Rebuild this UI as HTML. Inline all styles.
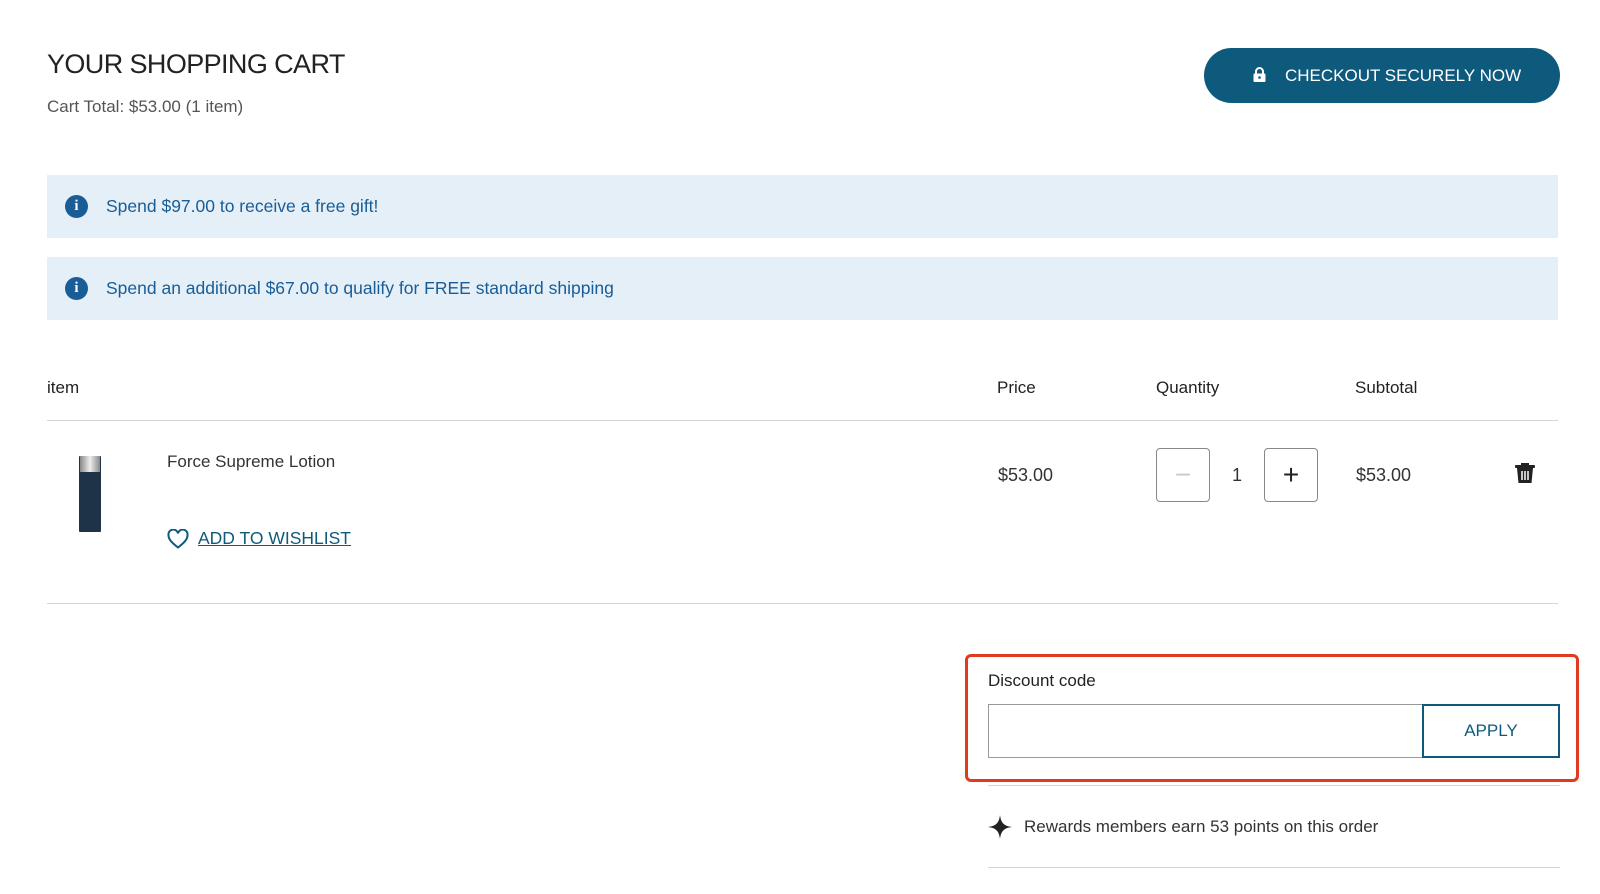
<!DOCTYPE html>
<html><head><meta charset="utf-8"><style>
*{box-sizing:border-box;margin:0;padding:0}
body{width:1600px;height:894px;background:#fff;font-family:"Liberation Sans",sans-serif;color:#222;position:relative;overflow:hidden}
.a{position:absolute;white-space:nowrap}
h1{position:absolute;left:47px;top:49px;font-size:27px;font-weight:400;color:#222;letter-spacing:-0.6px}
.banner{position:absolute;left:47px;width:1511px;height:63px;background:#e4eff8;color:#1a5d96;font-size:17.5px}
.banner .ic{position:absolute;left:18px;top:20px;width:23px;height:23px;border-radius:50%;background:#1a5d96;color:#fff;font-weight:700;font-size:15px;text-align:center;line-height:23px;font-family:"Liberation Serif",serif}
.banner span.t{position:absolute;left:59px;top:21px}
.hr{position:absolute;height:1px;background:#d6d6d6}
.qb{position:absolute;top:448px;width:54px;height:54px;border:1px solid #888;border-radius:4px;text-align:center;line-height:52px;font-size:28px}
</style></head><body>
<h1>YOUR SHOPPING CART</h1>
<div class="a" style="left:47px;top:97px;font-size:17px;color:#555">Cart Total: $53.00 (1 item)</div>
<div class="a" style="left:1204px;top:48px;width:356px;height:55px;border-radius:28px;background:#0d5a7d;color:#fff;font-size:17px;line-height:55px">
<svg style="position:absolute;left:49px;top:19px" width="13" height="15" viewBox="0 0 13 15"><path d="M3 7V4.5a3.5 3.5 0 0 1 7 0V7" fill="none" stroke="#fff" stroke-width="2"/><rect x="0.5" y="6.5" width="12" height="8.5" rx="1" fill="#fff"/><circle cx="6.5" cy="10.5" r="1.3" fill="#0d5a7d"/></svg>
<span style="position:absolute;left:81px">CHECKOUT SECURELY NOW</span></div>
<div class="banner" style="top:175px"><div class="ic">i</div><span class="t">Spend $97.00 to receive a free gift!</span></div>
<div class="banner" style="top:257px"><div class="ic">i</div><span class="t">Spend an additional $67.00 to qualify for FREE standard shipping</span></div>
<div class="a" style="left:47px;top:378px;font-size:17px">item</div>
<div class="a" style="left:997px;top:378px;font-size:17px">Price</div>
<div class="a" style="left:1156px;top:378px;font-size:17px">Quantity</div>
<div class="a" style="left:1355px;top:378px;font-size:17px">Subtotal</div>
<div class="hr" style="left:47px;top:420px;width:1511px"></div>
<div class="a" style="left:79px;top:456px;width:22px;height:76px;background:#1f3348;border-radius:1px"></div>
<div class="a" style="left:80px;top:456px;width:20px;height:16px;background:linear-gradient(90deg,#888,#eee,#888)"></div>
<div class="a" style="left:167px;top:452px;font-size:17px;color:#333">Force Supreme Lotion</div>
<svg class="a" style="left:167px;top:529px" width="22" height="20" viewBox="0 0 22 20"><path d="M11 18.5C4 13 1.5 10 1.5 6.3A4.8 4.8 0 0 1 11 4.5a4.8 4.8 0 0 1 9.5 1.8C20.5 10 18 13 11 18.5z" fill="none" stroke="#0d5a7d" stroke-width="2"/></svg>
<div class="a" style="left:198px;top:528px;font-size:17.5px;color:#0d5a7d;text-decoration:underline">ADD TO WISHLIST</div>
<div class="a" style="left:998px;top:465px;font-size:18px;color:#333">$53.00</div>
<div class="qb" style="left:1156px;color:#ccc">−</div>
<div class="a" style="left:1232px;top:465px;font-size:18px;color:#333">1</div>
<div class="qb" style="left:1264px;color:#222">+</div>
<div class="a" style="left:1356px;top:465px;font-size:18px;color:#333">$53.00</div>
<svg class="a" style="left:1514px;top:462px" width="22" height="22" viewBox="0 0 22 22"><rect x="7" y="1" width="8" height="3" fill="#222"/><rect x="1" y="3" width="20" height="3" rx="1" fill="#222"/><path d="M3 6l1.5 15h13L19 6z" fill="#222"/><path d="M8 9v9M11 9v9M14 9v9" stroke="#fff" stroke-width="1.5"/></svg>
<div class="hr" style="left:47px;top:603px;width:1511px"></div>
<div class="a" style="left:965px;top:654px;width:614px;height:128px;border:3px solid #e23a1f;border-radius:6px"></div>
<div class="a" style="left:988px;top:671px;font-size:17px">Discount code</div>
<div class="a" style="left:988px;top:704px;width:435px;height:54px;border:1px solid #999"></div>
<div class="a" style="left:1422px;top:704px;width:138px;height:54px;border:2px solid #0d5a7d;color:#0d5a7d;font-size:17px;text-align:center;line-height:50px">APPLY</div>
<div class="hr" style="left:988px;top:785px;width:572px"></div>
<svg class="a" style="left:988px;top:815px" width="24" height="24" viewBox="0 0 24 24"><path d="M12 0C13 8 16 11 24 12 16 13 13 16 12 24 11 16 8 13 0 12 8 11 11 8 12 0z" fill="#222"/></svg>
<div class="a" style="left:1024px;top:817px;font-size:17px;color:#333">Rewards members earn 53 points on this order</div>
<div class="hr" style="left:988px;top:867px;width:572px"></div>
</body></html>
